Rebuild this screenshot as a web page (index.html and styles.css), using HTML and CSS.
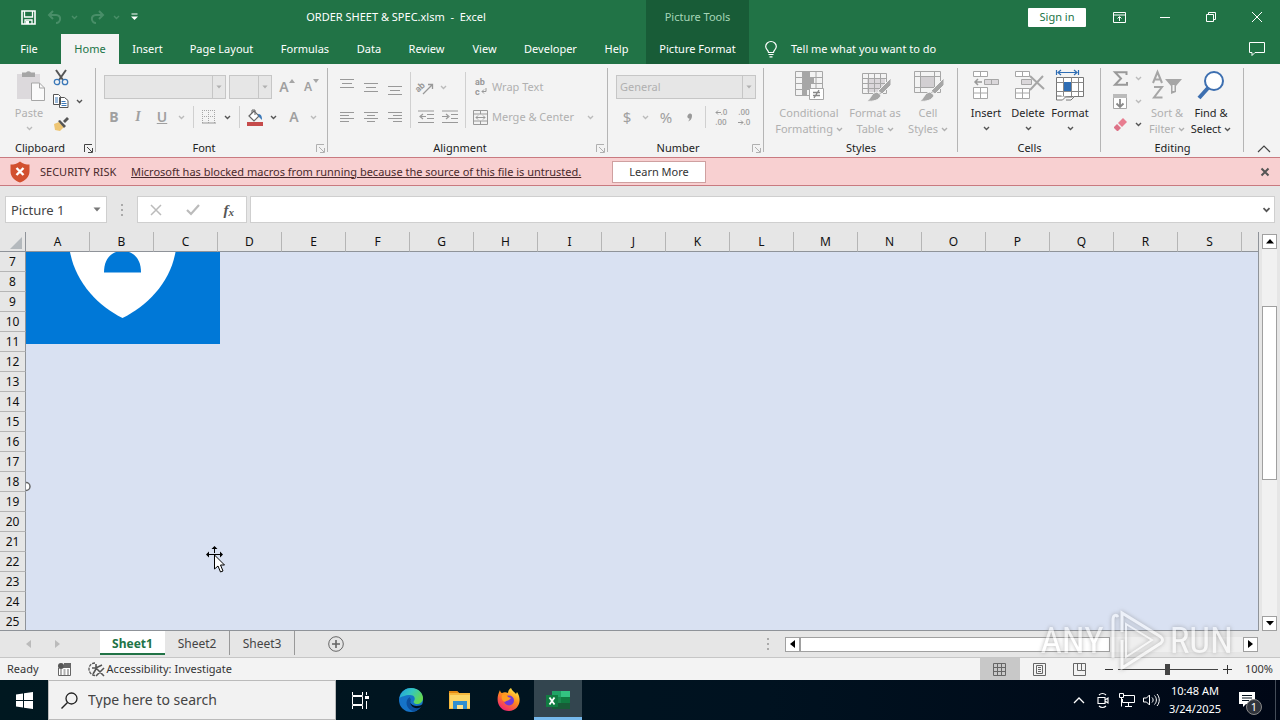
FILE: index.html
```html
<!DOCTYPE html>
<html lang="en">
<head>
<meta charset="utf-8">
<title>ORDER SHEET &amp; SPEC.xlsm - Excel</title>
<link rel="stylesheet" href="styles.css">
</head>
<body>
<svg class="defs" aria-hidden="true">
  <symbol id="chev" viewBox="0 0 7 5"><path d="M1 1l2.500 2.500L6 1" fill="none" stroke="currentColor" stroke-width="1.400"/></symbol>
  <symbol id="tri" viewBox="0 0 8 5"><path d="M0.500 0.500h7L4 4.500z" fill="currentColor"/></symbol>
  <symbol id="launch" viewBox="0 0 9 9"><path d="M0.500 8V0.500H8M3 3l5 5M8.500 4v4.500H4" fill="none" stroke="currentColor"/></symbol>
  <symbol id="brush" viewBox="0 0 32 32"><path d="M32 8v7l-9 9-4-3z" fill="#a6a6a6" stroke="#f3f3f3"/><path d="M18 22l4 3c-1 5-8 7-14 6 4-2 4-8 10-9z" fill="#a6a6a6" stroke="#f3f3f3"/></symbol>
</svg>
<div class="app">
  <header class="header">
    <div class="titlebar">
      <div class="qat">
        <button class="qb" aria-label="Save"><svg width="15" height="15" viewBox="0 0 15 15"><path d="M1 1h13v13H1z" fill="none" stroke="#fff" stroke-width="1.600"/><path d="M3.500 1v6h8V1M4 14v-4h7v4" fill="none" stroke="#fff" stroke-width="1.300"/><path d="M5 11h3v3H5z" fill="#fff"/></svg></button>
        <button class="qb dim" aria-label="Undo"><svg width="16" height="14" viewBox="0 0 16 14"><path d="M6 1L2 5l4 4M2 5h7c6 0 5 8 0 8" fill="none" stroke="currentColor" stroke-width="2"/></svg><svg width="7" height="5"><use href="#chev"/></svg></button>
        <button class="qb dim" aria-label="Redo"><svg width="16" height="14" viewBox="0 0 16 14"><path d="M10 1l4 4-4 4M14 5H7c-6 0-5 8 0 8" fill="none" stroke="currentColor" stroke-width="2"/></svg><svg width="7" height="5"><use href="#chev"/></svg></button>
        <button class="qb" aria-label="Customize"><svg width="7" height="8" viewBox="0 0 7 8"><path d="M0.500 1h6" stroke="#fff"/><path d="M0 3.500h7L3.500 7z" fill="#fff"/></svg></button>
      </div>
      <h1 class="doc">ORDER SHEET &amp; SPEC.xlsm&nbsp; -&nbsp; Excel</h1>
    </div>
    <div class="context">Picture Tools</div>
    <div class="winctl">
      <button class="signin">Sign in</button>
      <button class="wc" aria-label="Ribbon display"><svg width="13" height="11" viewBox="0 0 13 11"><path d="M0.500 0.500h12v10H0.500zM0.500 3h12M6.500 9V5M4.500 6.500l2-2 2 2" fill="none" stroke="#fff"/></svg></button>
      <button class="wc" aria-label="Minimize"><svg width="10" height="11"><path d="M0 5.500h10" stroke="#fff"/></svg></button>
      <button class="wc" aria-label="Restore"><svg width="10" height="10" viewBox="0 0 10 10"><path d="M0.500 2.500h7v7h-7zM2.500 2V0.500h7v7H8" fill="none" stroke="#fff"/></svg></button>
      <button class="wc" aria-label="Close"><svg width="10" height="10"><path d="M0 0l10 10M10 0L0 10" stroke="#fff"/></svg></button>
    </div>
    <nav class="tabs">
      <button class="tab">File</button><button class="tab on">Home</button><button class="tab">Insert</button><button class="tab">Page Layout</button><button class="tab">Formulas</button><button class="tab">Data</button><button class="tab">Review</button><button class="tab">View</button><button class="tab">Developer</button><button class="tab">Help</button>
    </nav>
    <button class="tab ctx">Picture Format</button>
    <div class="tellrow">
      <button class="tell"><svg width="12" height="17" viewBox="0 0 12 17"><path d="M3.500 11.500C3.500 9 0.700 8.500 0.700 5.500a5.300 5 0 0 1 10.600 0c0 3-2.800 3.500-2.800 6zM3.500 13.500h5M4.500 15.800h3" fill="none" stroke="#fff" stroke-width="1.200"/></svg><span>Tell me what you want to do</span></button>
      <button class="comment" aria-label="Comments"><svg width="16" height="14" viewBox="0 0 16 14"><path d="M0.500 0.500h15v10H6l-3 3v-3H0.500z" fill="none" stroke="#fff"/></svg></button>
    </div>
  </header>

  <section class="ribbon" aria-label="Ribbon">
    <div class="group g-clip">
      <div class="body">
        <button class="big off paste"><svg width="32" height="32" viewBox="0 0 32 32"><path d="M4 4h23v25H4z" fill="#dcd9dc"/><path d="M9 2.500h4a3 3 0 0 1 5 0h4V7H9z" fill="#a6a6a6"/><path d="M18.500 13h8l5 5v12.500h-13z" fill="#fafafa" stroke="#a6a6a6"/><path d="M26.500 13v5h5" fill="none" stroke="#a6a6a6"/></svg><span>Paste</span><svg class="under" width="7" height="5"><use href="#chev"/></svg></button>
        <div class="stack">
          <div class="srow"><button class="ib" aria-label="Cut"><svg width="16" height="16" viewBox="0 0 16 16"><path d="M3 0l7 10M13 0L6 10" stroke="#555" stroke-width="2"/><circle cx="4" cy="12" r="2.700" fill="none" stroke="#3b78b8" stroke-width="1.300"/><circle cx="12" cy="12" r="2.700" fill="none" stroke="#3b78b8" stroke-width="1.300"/></svg></button></div>
          <div class="srow"><button class="ib" aria-label="Copy"><svg width="16" height="14" viewBox="0 0 16 14"><path d="M0.500 0.500h5l2 2v8h-7zM6.500 3.500h5l3.500 3v7H6.500z" fill="#fff" stroke="#555"/><path d="M2 4h3M2 6h3M2 8h3M8.500 7.500h4M8.500 9.500h5M8.500 11.500h5" stroke="#3b78b8"/></svg></button><button class="cv on" aria-label="Copy options"><svg width="7" height="5"><use href="#chev"/></svg></button></div>
          <div class="srow"><button class="ib" aria-label="Format Painter"><svg width="16" height="14" viewBox="0 0 16 14"><path d="M1 7l5-2 5 5-4 4-5-1z" fill="#eec573"/><path d="M5 4l2-1 6 6-2 2zM10 4l4-4 2 2-4 4z" fill="#555"/></svg></button></div>
        </div>
      </div>
      <div class="foot"><span>Clipboard</span><button class="dl on" aria-label="Clipboard settings"><svg width="9" height="9"><use href="#launch"/></svg></button></div>
    </div>

    <div class="group g-font">
      <div class="body rows">
        <div class="row1 inset">
          <div class="combo c-name"><input aria-label="Font" disabled><span class="drop"><svg width="6" height="4"><use href="#tri"/></svg></span></div>
          <div class="combo c-size"><input aria-label="Font size" disabled><span class="drop"><svg width="6" height="4"><use href="#tri"/></svg></span></div>
          <button class="ib w24 glyph" aria-label="Increase font">A<svg class="sup" width="6" height="4" viewBox="0 0 6 4"><path d="M0 4l3-4 3 4z" fill="#a6a6a6"/></svg></button>
          <button class="ib w24 glyph small" aria-label="Decrease font">A<svg class="sup" width="6" height="4" viewBox="0 0 6 4"><path d="M0 0l3 4 3-4z" fill="#a6a6a6"/></svg></button>
        </div>
        <div class="row2 tuck">
          <button class="ib w24 glyph bold">B</button><button class="ib w24 glyph ital">I</button><button class="ib w24 glyph und">U</button><button class="cv" aria-label="Underline style"><svg width="7" height="5"><use href="#chev"/></svg></button><i class="sep"></i>
          <button class="ib" aria-label="Borders"><svg width="14" height="14" viewBox="0 0 14 14"><path d="M0.500 0v13M6.500 0v13M12.500 0v13M0 0.500h13M0 6.500h13" stroke="#a6a6a6" stroke-dasharray="1 1" fill="none"/><path d="M0 13h14" stroke="#999"/></svg></button><button class="cv on" aria-label="Border options"><svg width="7" height="5"><use href="#chev"/></svg></button><i class="sep"></i>
          <button class="ib" aria-label="Fill colour"><svg width="18" height="17" viewBox="0 0 18 17"><path d="M3 7l5-5 5 5-5 5z" fill="#fff" stroke="#666" stroke-width="1.200"/><path d="M6 4V1h3v5" fill="none" stroke="#666"/><path d="M12 5c3 0 4 2 4 6l-3-3z" fill="#3b78b8"/><path d="M1 13h16v4H1z" fill="#c54a4a"/></svg></button><button class="cv on" aria-label="Fill options"><svg width="7" height="5"><use href="#chev"/></svg></button>
          <button class="ib w28 glyph" aria-label="Font colour">A</button><button class="cv slim" aria-label="Font colour options"><svg width="7" height="5"><use href="#chev"/></svg></button>
        </div>
      </div>
      <div class="foot"><span>Font</span><button class="dl" aria-label="Font settings"><svg width="9" height="9"><use href="#launch"/></svg></button></div>
    </div>

    <div class="group g-align">
      <div class="body cols">
        <div class="rows">
          <div class="row1"><button class="ib w24" aria-label="Top align"><svg width="14" height="16"><path d="M0 0.500h14M2 4.500h10M0 8.500h14" stroke="#999"/></svg></button><button class="ib w24" aria-label="Middle align"><svg width="14" height="16"><path d="M0 4.500h14M2 8.500h10M0 12.500h14" stroke="#999"/></svg></button><button class="ib w24" aria-label="Bottom align"><svg width="14" height="16"><path d="M0 7.500h14M2 11.500h10M0 15.500h14" stroke="#999"/></svg></button></div>
          <div class="row2"><button class="ib w24" aria-label="Align left"><svg width="14" height="10"><path d="M0 0.500h14M0 3.500h9M0 6.500h14M0 9.500h9" stroke="#999"/></svg></button><button class="ib w24" aria-label="Centre"><svg width="14" height="10"><path d="M0 0.500h14M3 3.500h8M0 6.500h14M3 9.500h8" stroke="#999"/></svg></button><button class="ib w24" aria-label="Align right"><svg width="14" height="10"><path d="M0 0.500h14M5 3.500h9M0 6.500h14M5 9.500h9" stroke="#999"/></svg></button></div>
        </div>
        <i class="vsep"></i>
        <div class="rows">
          <div class="row1"><button class="ib w24" aria-label="Orientation"><svg width="18" height="16" viewBox="0 0 18 16"><text x="-1" y="10" transform="rotate(-42 5 9)" class="ab">ab</text><path d="M6 15L15 6M11 5.500h4.500V10" fill="none" stroke="#999" stroke-width="1.300"/></svg></button><button class="cv slim" aria-label="Orientation options"><svg width="7" height="5"><use href="#chev"/></svg></button></div>
          <div class="row2"><button class="ib w24" aria-label="Decrease indent"><svg width="17" height="14" viewBox="0 0 17 14"><path d="M0 1h16M9 4.500h7M9 8.500h7M0 12.500h16M2 6.500h6M5 4L2 6.500 5 9" fill="none" stroke="#999" stroke-width="1.200"/></svg></button><button class="ib w24" aria-label="Increase indent"><svg width="17" height="14" viewBox="0 0 17 14"><path d="M0 1h16M9 4.500h7M9 8.500h7M0 12.500h16M0 6.500h6M4 4l3 2.500L4 9" fill="none" stroke="#999" stroke-width="1.200"/></svg></button></div>
        </div>
        <i class="vsep"></i>
        <div class="rows">
          <div class="row1"><button class="lb"><svg width="14" height="16" viewBox="0 0 14 16"><text x="1" y="6" class="ab">ab</text><text x="1" y="16" class="ab">c</text><path d="M12 9v3.500H8M10 10.500l-2 2 2 2" fill="none" stroke="#999"/></svg><span>Wrap Text</span></button></div>
          <div class="row2"><button class="lb merge"><svg width="16" height="15" viewBox="0 0 16 15"><path d="M0.500 0.500h14v14H0.500zM0.500 4h14M0.500 11h14M7.500 0v4M7.500 11v4M3 7.500h9M5 5.500l-2 2 2 2M10 5.500l2 2-2 2" fill="none" stroke="#999"/></svg><span>Merge &amp; Center</span></button><button class="cv" aria-label="Merge options"><svg width="7" height="5"><use href="#chev"/></svg></button></div>
        </div>
      </div>
      <div class="foot"><span>Alignment</span><button class="dl" aria-label="Alignment settings"><svg width="9" height="9"><use href="#launch"/></svg></button></div>
    </div>

    <div class="group g-num">
      <div class="body rows">
        <div class="row1 inset"><div class="combo c-num"><input aria-label="Number format" value="General" disabled><span class="drop"><svg width="6" height="4"><use href="#tri"/></svg></span></div></div>
        <div class="row2 inset"><button class="ib glyph thin">$</button><button class="cv" aria-label="Currency options"><svg width="7" height="5"><use href="#chev"/></svg></button><button class="ib w28 glyph thin">%</button><button class="ib w20 glyph comma" aria-label="Comma style"><svg width="6" height="9" viewBox="0 0 6 9"><path d="M1 2a2 2 0 1 1 4 1C5 6 3 8 1 8.500c1-1 1.500-2 1.500-3A2 2 0 0 1 1 2z" fill="#999"/></svg></button><i class="sep"></i><button class="ib dec" aria-label="Increase decimal"><span><svg width="6" height="5" viewBox="0 0 6 5"><path d="M6 2.500H1M3 0.500l-2 2 2 2" fill="none" stroke="#999"/></svg>.0</span><span>.00</span></button><button class="ib w24 dec" aria-label="Decrease decimal"><span>.00</span><span><svg width="6" height="5" viewBox="0 0 6 5"><path d="M0 2.500h5M3 0.500l2 2-2 2" fill="none" stroke="#999"/></svg>.0</span></button></div>
      </div>
      <div class="foot"><span>Number</span><button class="dl" aria-label="Number settings"><svg width="9" height="9"><use href="#launch"/></svg></button></div>
    </div>

    <div class="group g-style">
      <div class="body">
        <button class="big off b-cond"><svg width="32" height="32" viewBox="0 0 32 32"><path d="M2.500 1.500h27v24h-27zM2.500 7.500h27M2.500 13.500h27M2.500 19.500h27M9.500 1v25M16.500 1v25M23 1v25" fill="none" stroke="#a6a6a6"/><path d="M10 2h6v5h-6zM10 8h11v5H10zM10 14h8v5h-8zM10 20h4v5h-4z" fill="#a6a6a6"/><path d="M16.500 18.500h14v11h-14z" fill="#fff" stroke="#a6a6a6"/><path d="M20 22.500h7M20 25.500h7M26 20l-5 8" stroke="#888" stroke-width="1.300"/></svg><span>Conditional<br>Formatting <svg width="7" height="5"><use href="#chev"/></svg></span></button>
        <button class="big off b-tab"><svg width="32" height="32" viewBox="0 0 32 32"><path d="M8 9h18v13H8z" fill="#dad7da"/><path d="M3.500 3.500h24v20h-24zM3.500 8.500h24M3.500 13.500h24M3.500 18.500h24M9.500 3v20M15.500 3v20M21.500 3v20" fill="none" stroke="#a6a6a6"/><use href="#brush"/></svg><span>Format as<br>Table <svg width="7" height="5"><use href="#chev"/></svg></span></button>
        <button class="big off b-cell"><svg width="32" height="32" viewBox="0 0 32 32"><path d="M8 7h15v11H8z" fill="#d2cfd2"/><path d="M2.500 1.500h26v21h-26zM2.500 6.500h26M2.500 17.500h26M8.500 1v21M22.500 1v21" fill="none" stroke="#a6a6a6"/><use href="#brush"/></svg><span>Cell<br>Styles <svg width="7" height="5"><use href="#chev"/></svg></span></button>
      </div>
      <div class="foot"><span>Styles</span></div>
    </div>

    <div class="group g-cells">
      <div class="body">
        <button class="big"><svg width="32" height="32" viewBox="0 0 32 32"><path d="M3.500 1.500h14v5h-14zM10.500 1v5M3.500 17.500h14v11h-14zM3.500 23h14M10.500 17v11" fill="#fff" stroke="#a6a6a6"/><path d="M14.500 9.500h14v5h-14zM21.500 9v5" fill="#dad7da" stroke="#a6a6a6"/><path d="M12 12H5M8 9l-3 3 3 3" fill="none" stroke="#999" stroke-width="1.500"/></svg><span>Insert</span><svg class="under" width="7" height="5"><use href="#chev"/></svg></button>
        <button class="big"><svg width="32" height="32" viewBox="0 0 32 32"><path d="M3.500 1.500h14v5h-14zM10.500 1v5M3.500 18.500h14v10h-14zM3.500 23h14M10.500 18v10" fill="#fff" stroke="#a6a6a6"/><path d="M9.500 9.500h10v5h-10z" fill="#dad7da" stroke="#a6a6a6"/><path d="M18 6l14 13M31 6L18 20" stroke="#a6a6a6" stroke-width="2"/></svg><span>Delete</span><svg class="under" width="7" height="5"><use href="#chev"/></svg></button>
        <button class="big"><svg width="32" height="32" viewBox="0 0 32 32"><path d="M2.500 0v5M24.500 0v5M4 2.500h19M7 0L4 2.500 7 5M20 0l3 2.500L20 5" fill="none" stroke="#2e6db4" stroke-width="1.200"/><path d="M2.500 7.500h27v19h-27z" fill="#fff" stroke="#777"/><path d="M2.500 12.500h27M2.500 21.500h27M9.500 7v19M17.500 7v19M24.500 7v19" stroke="#888"/><path d="M10 12h7v9h-7z" fill="#2e6db4"/><path d="M2.500 26v4h6l3-3h7M12 30h5l4-4M2.500 26h5" fill="#fff" stroke="#777"/></svg><span>Format</span><svg class="under" width="7" height="5"><use href="#chev"/></svg></button>
      </div>
      <div class="foot"><span>Cells</span></div>
    </div>

    <div class="group g-edit">
      <div class="body">
        <div class="stack">
          <div class="srow"><button class="ib" aria-label="AutoSum"><svg width="15" height="15" viewBox="0 0 15 15"><path d="M13.500 4V1.200H2L8 7.500 2 13.800h12V11" fill="none" stroke="#999" stroke-width="2"/></svg></button><button class="cv" aria-label="AutoSum options"><svg width="7" height="5"><use href="#chev"/></svg></button></div>
          <div class="srow"><button class="ib" aria-label="Fill"><svg width="14" height="15" viewBox="0 0 14 15"><path d="M0.500 0.500h13v14H0.500z" fill="#fff" stroke="#a6a6a6"/><path d="M0 0h14v4H0z" fill="#bbb"/><path d="M7 5v8M3.500 9.500L7 13l3.500-3.500" fill="none" stroke="#888" stroke-width="1.800"/></svg></button><button class="cv" aria-label="Fill options"><svg width="7" height="5"><use href="#chev"/></svg></button></div>
          <div class="srow"><button class="ib" aria-label="Clear"><svg width="14" height="13" viewBox="0 0 14 13"><path d="M5 5l5-5 4 4-5 5z" fill="#e87d90"/><path d="M4 6l4 4-3 3H4L1 10V9z" fill="#dd7287"/></svg></button><button class="cv on" aria-label="Clear options"><svg width="7" height="5"><use href="#chev"/></svg></button></div>
        </div>
        <button class="big off"><svg width="32" height="32" viewBox="0 0 32 32"><path d="M2 13L6.500 2 11 13M3.500 9.500h6M3 17h8L3 27.500h8.500" fill="none" stroke="#a6a6a6" stroke-width="2"/><path d="M14 9h17l-6 7v6l-5 2v-8z" fill="#a6a6a6"/><path d="M21.500 15h2v6h-2z" fill="#f3f3f3"/></svg><span>Sort &amp;<br>Filter <svg width="7" height="5"><use href="#chev"/></svg></span></button>
        <button class="big"><svg width="32" height="32" viewBox="0 0 32 32"><path d="M13 18L4 28" stroke="#3d6fb0" stroke-width="4"/><circle cx="19" cy="11" r="9" fill="#fff" stroke="#3d6fb0" stroke-width="2"/></svg><span>Find &amp;<br>Select <svg width="7" height="5"><use href="#chev"/></svg></span></button>
      </div>
      <div class="foot"><span>Editing</span></div>
    </div>
    <button class="collapse" aria-label="Collapse ribbon"><svg width="14" height="8"><path d="M1 7l6-6 6 6" fill="none" stroke="#444" stroke-width="1.200"/></svg></button>
  </section>

  <section class="warn">
    <svg width="20" height="22" viewBox="0 0 20 22"><path d="M10 0.500c3 2.500 6 3 9.500 3V10c0 6-4 9.500-9.500 11.500C4.500 19.500 0.500 16 0.500 10V3.500c3.500 0 6.500-0.500 9.500-3z" fill="#d2502f"/><path d="M6.500 7l7 7M13.500 7l-7 7" stroke="#fff" stroke-width="2.400"/></svg>
    <strong>SECURITY RISK</strong>
    <a href="#">Microsoft has blocked macros from running because the source of this file is untrusted.</a>
    <button class="learn">Learn More</button>
    <button class="dismiss" aria-label="Close message"><svg width="8" height="8"><path d="M0.500 0.500l7 7M7.500 0.500l-7 7" stroke="#555" stroke-width="2"/></svg></button>
  </section>

  <section class="fbar">
    <div class="namebox"><input aria-label="Name box" value="Picture 1"><svg width="8" height="5"><use href="#tri"/></svg></div>
    <span class="dots"><svg width="3" height="12"><path d="M0 0h2v2H0zM0 5h2v2H0zM0 10h2v2H0z" fill="#aaa"/></svg></span>
    <div class="fx">
      <button aria-label="Cancel"><svg width="12" height="12"><path d="M1 1l10 10M11 1L1 11" stroke="#bbb" stroke-width="1.500"/></svg></button>
      <button aria-label="Enter"><svg width="14" height="12"><path d="M1 6l4 4 8-9" fill="none" stroke="#bbb" stroke-width="2.200"/></svg></button>
      <button class="fxb" aria-label="Insert function"><i>f</i><i class="x">x</i></button>
    </div>
    <div class="formula"><input aria-label="Formula"><svg width="9" height="6"><use href="#chev"/></svg></div>
  </section>

  <main class="work">
    <div class="sheet">
      <table class="grid">
        <thead><tr><th class="corner"><svg width="12" height="12"><path d="M12 0v12H0z" fill="#b4b9bd"/></svg></th><th>A</th><th>B</th><th>C</th><th>D</th><th>E</th><th>F</th><th>G</th><th>H</th><th>I</th><th>J</th><th>K</th><th>L</th><th>M</th><th>N</th><th>O</th><th>P</th><th>Q</th><th>R</th><th>S</th><th class="rest"></th></tr></thead>
        <tbody>
          <tr><th>7</th><td colspan="20"></td></tr><tr><th>8</th><td colspan="20"></td></tr><tr><th>9</th><td colspan="20"></td></tr><tr><th>10</th><td colspan="20"></td></tr><tr><th>11</th><td colspan="20"></td></tr><tr><th>12</th><td colspan="20"></td></tr><tr><th>13</th><td colspan="20"></td></tr><tr><th>14</th><td colspan="20"></td></tr><tr><th>15</th><td colspan="20"></td></tr><tr><th>16</th><td colspan="20"></td></tr><tr><th>17</th><td colspan="20"></td></tr><tr><th>18</th><td colspan="20"></td></tr><tr><th>19</th><td colspan="20"></td></tr><tr><th>20</th><td colspan="20"></td></tr><tr><th>21</th><td colspan="20"></td></tr><tr><th>22</th><td colspan="20"></td></tr><tr><th>23</th><td colspan="20"></td></tr><tr><th>24</th><td colspan="20"></td></tr><tr><th>25</th><td colspan="20"></td></tr>
        </tbody>
      </table>
      <svg class="pic" width="194" height="92" viewBox="0 0 194 92"><path d="M0 0h194v92H0z" fill="#0078d7"/><path d="M44 0c6 31 28 54 52.500 66C121 54 144 31 149.500 0z" fill="#fff"/><path d="M78 20.500C78 10 82 3 90 0h13c8 3 12 10 12 20.500z" fill="#0078d7"/></svg>
      <svg class="handle" width="5" height="11" viewBox="0 0 5 11"><circle cx="0" cy="5.500" r="4" fill="#fff" stroke="#666" stroke-width="1.500"/></svg>
      <svg class="cursor" width="20" height="28" viewBox="0 0 20 28"><path d="M8.500 1v6M1 8.500h15M8.500 9v7" stroke="#000"/><path d="M8.500 0l3 3h-6zM0 8.500l3-3v6zM17 8.500l-3-3v6z" fill="#000"/><path d="M8.500 9v14l3.500-3 2.500 6 2.500-1-2.500-6h4z" fill="#fff" stroke="#000"/></svg>
    </div>
    <div class="vscroll">
      <button aria-label="Scroll up"><svg width="8" height="5"><path d="M0 4.500h8L4 0z"/></svg></button>
      <div class="track"><span class="lead"></span><span class="thumb"></span><span class="trail"></span></div>
      <button aria-label="Scroll down"><svg width="8" height="5"><path d="M0 0h8L4 4.500z"/></svg></button>
    </div>
  </main>

  <section class="sheets">
    <div class="nav"><button aria-label="Previous sheet"><svg width="5" height="8"><path d="M5 0v8L0 4z" fill="#bbb"/></svg></button><button aria-label="Next sheet"><svg width="5" height="8"><path d="M0 0v8l5-4z" fill="#bbb"/></svg></button></div>
    <button class="stab on">Sheet1</button><button class="stab">Sheet2</button><button class="stab">Sheet3</button>
    <button class="add" aria-label="New sheet"><svg width="16" height="16"><circle cx="8" cy="8" r="7.300" fill="none" stroke="#666"/><path d="M8 4v8M4 8h8" stroke="#666" stroke-width="1.600"/></svg></button>
    <span class="hdots"><svg width="3" height="12"><path d="M0 0h2v2H0zM0 5h2v2H0zM0 10h2v2H0z" fill="#aaa"/></svg></span>
    <div class="hscroll">
      <button aria-label="Scroll left"><svg width="5" height="8"><path d="M5 0v8L0 4z"/></svg></button>
      <div class="htrack"><span class="hthumb"></span></div>
      <button aria-label="Scroll right"><svg width="5" height="8"><path d="M0 0v8l5-4z"/></svg></button>
    </div>
  </section>

  <footer class="status">
    <span class="ready">Ready</span>
    <button class="macro" aria-label="Record macro"><svg width="13" height="13" viewBox="0 0 13 13"><path d="M0.500 5v7.500h12V0.500H7M1 4.500h12" fill="#fff" stroke="#666"/><path d="M6 0h7v4H6z" fill="#666"/><circle cx="3" cy="3" r="3" fill="#555"/><path d="M2 7h2M5.500 7h2M9 7h2M2 9h2M5.500 9h2M9 9h2M2 11h2M5.500 11h2M9 11h2" stroke="#666"/></svg></button>
    <button class="acc"><svg width="17" height="15" viewBox="0 0 17 15"><path d="M7 1C3 1 1 4 1 7s2 6 6 6.500" fill="none" stroke="#555" stroke-width="1.300" stroke-dasharray="3 1"/><path d="M4 6h4l6-3M8 2v5l-3 5M8 6l8 8M16 6l-8 8" fill="none" stroke="#555" stroke-width="1.600"/></svg><span>Accessibility: Investigate</span></button>
    <div class="views">
      <button class="on" aria-label="Normal"><svg width="13" height="13"><path d="M0.500 0.500h12v12H0.500zM4.500 0v13M8.500 0v13M0 4.500h13M0 8.500h13" fill="none" stroke="#666"/></svg></button>
      <button aria-label="Page layout"><svg width="13" height="13"><path d="M0.500 0.500h12v12H0.500zM3.500 2.500h6v8h-6zM5 4.500h3M5 6.500h3M5 8.500h3" fill="none" stroke="#666"/></svg></button>
      <button aria-label="Page break preview"><svg width="13" height="13"><path d="M0.500 0.500h12v12H0.500zM4.500 0v7.500h4V0M8.500 7.500h4" fill="none" stroke="#666"/></svg></button>
    </div>
    <div class="zoom"><button aria-label="Zoom out"><svg width="8" height="9"><path d="M0 4.500h8" stroke="#333"/></svg></button><input type="range" min="0" max="100" value="50" aria-label="Zoom"><button aria-label="Zoom in"><svg width="9" height="9"><path d="M0 4.500h9M4.500 0v9" stroke="#333"/></svg></button><span>100%</span></div>
  </footer>

  <footer class="taskbar">
    <button class="start" aria-label="Start"><svg width="17" height="17" viewBox="0 0 17 17"><path d="M0 2.500l7-1v6.500H0zM8 1.300L17 0v8H8zM0 9h7v6.500l-7-1zM8 9h9v8l-9-1.300z" fill="#fff"/></svg></button>
    <label class="search"><svg width="17" height="17" viewBox="0 0 17 17"><circle cx="10.500" cy="6.500" r="5.500" fill="none" stroke="#222" stroke-width="1.300"/><path d="M6.500 10.500L0.500 16.500" stroke="#222" stroke-width="1.400"/></svg><input aria-label="Search" placeholder="Type here to search"></label>
    <button class="task first" aria-label="Task view"><svg width="17" height="17" viewBox="0 0 17 17"><path d="M0.500 0v3.500h10V0M0.500 17v-3.500h10V17M0.500 4.500h10v8H0.500zM14.500 0v3M14.500 9v8" fill="none" stroke="#fff"/><path d="M13 4h4v3h-4z" fill="#fff"/></svg></button>
    <button class="task" aria-label="Edge"><svg width="24" height="24" viewBox="0 0 24 24"><defs><linearGradient id="eg" x1="0" y1="0" x2="1" y2="0.500"><stop offset="0" stop-color="#1e9be0"/><stop offset="0.500" stop-color="#34c6c0"/><stop offset="1" stop-color="#64d850"/></linearGradient></defs><circle cx="12" cy="12" r="12" fill="#1573c8"/><path d="M0.500 10C2 3 7 0 12 0c8 0 12 6 12 10s-3 6-6 6-4-2-3-3c2-3 0-6-4-6-5 0-9 2-10.500 3z" fill="url(#eg)"/><path d="M11 9c-6 3-4 13 4 14.500 3-0.500 6-3 7.500-5.500-6 3-13 0-11.500-9z" fill="#0c4f9d"/><path d="M11.500 10c-2 4 1 8 6 8 3 0 5-1 6-2l-1 3c-6 3-13 0-11-9z" fill="#02101c"/></svg></button>
    <button class="task" aria-label="File Explorer"><svg width="22" height="20" viewBox="0 0 22 20"><path d="M0 1h8l2 2h11v16H0z" fill="#f5b83d"/><path d="M0 1h8l2 2H0z" fill="#e38a12"/><path d="M1 5h20v13H1z" fill="#fcd667"/><path d="M4 11h14v8h-4v-4H8v4H4z" fill="#2f8fd0"/><path d="M8 15h6v4H8z" fill="#fbe08a"/></svg></button>
    <button class="task" aria-label="Firefox"><svg width="24" height="24" viewBox="0 0 24 24"><defs><linearGradient id="ff" x1="0.800" y1="0" x2="0.200" y2="1"><stop offset="0" stop-color="#fff04a"/><stop offset="0.450" stop-color="#ff8a1c"/><stop offset="1" stop-color="#f0197c"/></linearGradient></defs><path d="M3 2c0 1 1 3 2 3 2-1 4-1 6 0 0-2 1-4 3-5 1 3 4 4 5 6l1-2c6 9 1 19-8 19S-3 14 3 2z" fill="url(#ff)"/><circle cx="12" cy="12.500" r="5" fill="#7138d8"/><path d="M5 7c3-1 5 0 6 2l3 1c-2 3-5 2-6 4-3-1-4-4-3-7z" fill="#ff9c20"/></svg></button>
    <button class="task active" aria-label="Excel"><svg width="24" height="20" viewBox="0 1 24 20"><path d="M6 2h9v18H6z" fill="#1b8a50"/><path d="M15 2h9v6h-9z" fill="#33c481"/><path d="M6 2h9v6H6z" fill="#21a366"/><path d="M15 8h9v6h-9z" fill="#107c41"/><path d="M6 14h18v6H6z" fill="#185c37"/><path d="M0 6h12v12H0z" fill="#107c41"/><path d="M3.500 8.500l5 7M8.500 8.500l-5 7" stroke="#fff" stroke-width="1.800"/></svg></button>
    <div class="tray">
      <button aria-label="Hidden icons"><svg width="12" height="7"><path d="M1 6l5-5 5 5" fill="none" stroke="#fff" stroke-width="1.300"/></svg></button>
      <button aria-label="Meet now"><svg width="12" height="17" viewBox="0 0 12 17"><path d="M1 5.500h7v6H1zM8 8l3-2v5L8 9M2 3c2-2 5-2 7 0M2 14c2 2 5 2 7 0" fill="none" stroke="#fff" stroke-width="1.100"/></svg></button>
      <button aria-label="Network"><svg width="16" height="14" viewBox="0 0 16 14"><path d="M5 2.500h10.500v7H3.500V6M9.500 10v3M6 13.500h7M0.500 0.500h4v4h-4zM2.500 5v8.500" fill="none" stroke="#fff"/></svg></button>
      <button aria-label="Volume"><svg width="17" height="14" viewBox="0 0 17 14"><path d="M0.500 5h3l3-3v10l-3-3h-3zM9 4.500c1.500 1.500 1.500 3.500 0 5M11.500 2.500c2.500 2.500 2.500 6.500 0 9M14 1c3 3.500 3 8.500 0 12" fill="none" stroke="#fff"/></svg></button>
      <div class="clock"><span>10:48 AM</span><span>3/24/2025</span></div>
      <button class="notif" aria-label="Notifications"><svg width="16" height="16" viewBox="0 0 16 16"><path d="M0 0h16v12H7l-3 3v-3H0z" fill="#fff"/><path d="M3 3.500h10M3 6h10M3 8.500h7" stroke="#02101c"/></svg><span class="badge">1</span></button>
      <span class="desk"></span>
    </div>
  </footer>

  <div class="mark" aria-hidden="true"><span>ANY</span><svg width="54" height="62" viewBox="0 0 54 62"><path d="M3 48V10c0-5 3-6 5-3" fill="none" stroke="#fff" stroke-width="3"/><path d="M12 22V3l39 24c2 2 2 4 0 6L12 58V30" fill="none" stroke="#fff" stroke-width="3"/><path d="M16 14l26 16-26 17z" fill="none" stroke="#fff" stroke-width="2"/></svg><span>RUN</span></div>
</div>
</body>
</html>
```
FILE: styles.css
```css
* { box-sizing: border-box; }
body { margin: 0; font: 11px/16px "Noto Sans", "Open Sans", sans-serif; color: #262626; }
button, input { font: inherit; color: inherit; border: 0; margin: 0; padding: 0; background: none; }
button { display: flex; align-items: center; justify-content: center; white-space: nowrap; }
input { min-width: 0; outline: 0; }
svg { display: block; flex: none; overflow: visible; }
.defs { position: absolute; width: 0; height: 0; }
.app { position: relative; display: flex; flex-direction: column; height: 100vh; overflow: hidden; background: #e6e6e6; }

/* Title bar and tabs */
.header { display: grid; grid-template-columns: 646px 103px 1fr; grid-template-rows: 34px 30px; background: #217346; color: #fff; flex: none; }
.titlebar { display: flex; align-items: center; }
.qat { display: flex; align-items: center; gap: 11px; padding-left: 21px; width: 146px; }
.qb { height: 24px; gap: 8px; }
.qb.dim { color: #5a9a76; }
.qb.dim svg { opacity: .7; }
.doc { flex: 1; margin: 0; font-size: 11px; font-weight: 400; text-align: center; }
.context { display: flex; align-items: center; justify-content: center; background: #185c37; color: #a5d6b8; }
.winctl { display: flex; align-items: center; justify-content: flex-end; }
.signin { width: 58px; height: 19px; background: #fff; color: #217346; margin-right: 10px; border-radius: 1px; }
.wc { width: 46px; height: 30px; }
.tabs { display: grid; grid-template-columns: 61px 58px 57px 91px 76px 52px 63px 53px 79px 53px; }
.tab { height: 30px; color: #fff; }
.tab:first-child { padding-right: 3px; }
.tab.on { background: #f3f3f3; color: #217346; }
.tab.ctx { background: #185c37; }
.tellrow { display: flex; justify-content: space-between; padding: 0 15px 0 16px; }
.tell { gap: 14px; }

/* Ribbon */
.ribbon { display: flex; flex: none; height: 93px; background: #f3f3f3; }
.group { position: relative; display: flex; flex-direction: column; justify-content: space-between; flex: none; padding-bottom: 1px; }
.group::after { content: ""; position: absolute; right: 0; top: 4px; bottom: 5px; width: 1px; background: #b5b5b5; }
.g-clip { width: 96px; }
.g-font { width: 232px; }
.g-align { width: 280px; }
.g-num { width: 156px; }
.g-style { width: 194px; }
.g-cells { width: 143px; }
.g-edit { width: 143px; }
.body { display: flex; }
.rows { display: flex; flex-direction: column; gap: 7px; padding-top: 11px; }
.cols { padding-left: 7px; }
.cols .rows:last-child { flex: 1; }
.row1, .row2 { display: flex; align-items: center; height: 24px; }
.row2 { height: 22px; }
.inset { padding-left: 8px; }
.tuck { padding-left: 6px; }
.foot { display: flex; height: 16px; text-align: center; color: #222; }
.foot span { flex: 1; }
.dl { width: 16px; color: #b0b0b0; }
.dl.on { color: #444; }
.ib { width: 22px; height: 22px; position: relative; flex: none; }
.w20 { width: 20px; }
.w24 { width: 24px; }
.w28 { width: 28px; }
.cv { width: 14px; height: 22px; color: #bbb; }
.cv.on { color: #555; }
.cv.slim { width: 10px; }
.sep { width: 10px; height: 22px; background: linear-gradient(#d0d0d0, #d0d0d0) center / 1px 100% no-repeat; }
.vsep { width: 7px; height: 56px; margin-top: 8px; background: linear-gradient(#d0d0d0, #d0d0d0) center / 1px 100% no-repeat; }
.glyph { font-size: 14px; font-weight: 600; color: #a0a0a0; }
.bold { font-weight: 700; }
.small { font-size: 12px; }
.ital { font-family: "Liberation Serif", serif; font-style: italic; }
.und { text-decoration: underline; }
.thin { font-size: 15px; font-weight: 400; }
.sup { position: absolute; right: 1px; top: 3px; }
.combo { display: flex; height: 24px; background: #e6e6e6; border: 1px solid #c6c6c6; color: #b0b0b0; }
.combo input { flex: 1; width: 0; padding-left: 3px; }
.combo .drop { display: flex; align-items: center; justify-content: center; width: 13px; border-left: 1px solid #c6c6c6; }
.c-name { width: 122px; margin-right: 3px; }
.c-size { width: 43px; }
.c-num { width: 140px; }
.ab { font: 700 9px Roboto, sans-serif; fill: #999; }
.lb { gap: 4px; padding-left: 5px; color: #b0b0b0; }
.merge { padding-left: 4px; gap: 3px; margin-right: 9px; }
.dec { flex-direction: column; font: 600 8px/10px "Open Sans", sans-serif; color: #a0a0a0; }
.dec span { display: flex; align-items: center; }
.big { flex-direction: column; justify-content: flex-start; width: 44px; padding-top: 6px; }
.big span { margin-top: 3px; }
.big span svg { display: inline-block; vertical-align: 1px; color: #555; }
.big.off, .big.off span svg { color: #b0b0b0; }
.under { margin-top: 5px; color: #555; }
.off .under { color: #bbb; }
.paste { width: 34px; margin-left: 12px; }
.stack { display: flex; flex-direction: column; gap: 1px; padding-top: 3px; margin-left: 4px; }
.srow { display: flex; }
.g-edit .stack { margin-left: 8px; }
.g-style .body { padding-left: 9px; }
.g-cells .body { padding-left: 7px; }
.g-cells .big { width: 42px; }
.b-cond { width: 72px; }
.b-tab { width: 60px; }
.b-cell { width: 46px; }
.collapse { margin: auto 9px 4px auto; }

/* Message bar */
.warn { display: flex; align-items: center; flex: none; height: 29px; padding: 0 11px 0 10px; background: #f8d0d1; border: solid #c97a80; border-width: 1px 0; color: #4a2a2c; white-space: nowrap; }
.warn strong { font-weight: 400; margin: 0 10px; min-width: 81px; }
.warn a { color: inherit; min-width: 460px; }
.learn { width: 94px; height: 22px; margin-left: 21px; background: #fff; border: 1px solid #cfa0a0; color: #333; }
.dismiss { margin-left: auto; }

/* Formula bar */
.fbar { display: flex; flex: none; padding: 10px 5px 9px; }
.namebox, .fx, .formula { display: flex; align-items: center; height: 27px; background: #fff; border: 1px solid #cfcfcf; }
.namebox { width: 102px; padding: 0 5px; color: #777; }
.namebox input { flex: 1; width: 0; font-size: 13px; color: #444; }
.dots { display: flex; align-items: center; justify-content: center; width: 30px; }
.fx { width: 110px; justify-content: space-around; }
.fxb { font: italic 700 15px/20px "Liberation Serif", serif; color: #555; }
.fxb .x { font-size: 11px; padding-top: 4px; }
.formula { flex: 1; margin-left: 3px; padding-right: 3px; color: #555; }
.formula input { flex: 1; height: 24px; }

/* Worksheet */
.work { display: flex; flex: 1; min-height: 0; }
.sheet { position: relative; flex: 1; min-width: 0; overflow: hidden; border: solid #8f9399; border-width: 0 1px 1px 0; background: #d9e1f2; }
.grid { width: 100%; table-layout: fixed; border-collapse: separate; border-spacing: 0; font-size: 12px; line-height: 18px; color: #111; }
.grid th { width: 64px; height: 20px; padding: 0; font-weight: 400; background: #e6e6e6; border: solid #b5b5b5; border-width: 0 1px 1px 0; }
.grid thead th { border-bottom-color: #8f9399; }
.grid .corner, .grid tbody th { width: 26px; border-right-color: #8f9399; }
.grid .rest { width: auto; border-right: 0; }
.grid td { padding: 0; }
.corner svg { margin: 2px 0 0 10px; }
.pic { position: absolute; left: 26px; top: 20px; }
.handle { position: absolute; left: 26px; top: 249px; overflow: hidden; }
.cursor { position: absolute; left: 206px; top: 314px; }
.vscroll { display: flex; flex-direction: column; width: 21px; padding: 2px 3px 0; }
.vscroll button, .hscroll button { flex: none; width: 15px; height: 15px; background: #fff; border: 1px solid #a0a0a0; }
.track { flex: 1; display: flex; flex-direction: column; width: 15px; background: #f1f1f1; }
.lead { flex: 58; }
.thumb { flex: 173; background: #fff; border: 1px solid #a0a0a0; }
.trail { flex: 138; }

/* Sheet tabs */
.sheets { display: flex; flex: none; height: 27px; padding-right: 22px; border-bottom: 1px solid #c6c6c6; }
.nav { display: flex; width: 100px; padding: 0 40px 0 26px; justify-content: space-between; }
.stab { width: 65px; height: 24px; padding-top: 2px; font-size: 12px; color: #444; border-right: 1px solid #999; }
.stab.on { padding-top: 3px; background: #fff; color: #217346; font-weight: 700; border-right: 0; border-bottom: 2px solid #217346; }
.add { width: 82px; }
.hdots { display: flex; align-items: center; margin: 0 15px 0 auto; }
.hscroll { display: flex; align-items: center; flex: 0 1 473px; }
.htrack { flex: 1; height: 15px; background: #efefef; }
.hthumb { display: block; width: 70%; height: 15px; background: #fff; border: 1px solid #a0a0a0; }

/* Status bar */
.status { display: flex; flex: none; align-items: center; height: 22px; padding: 0 7px; background: #f3f3f3; color: #333; }
.macro { margin: 0 17px 0 19px; }
.acc { gap: 2px; }
.views { display: flex; margin-left: auto; }
.views button { width: 40px; height: 22px; }
.views .on { background: #c8c8c8; }
.zoom { display: flex; align-items: center; gap: 5px; margin-left: 5px; }
.zoom span { margin-left: 8px; }
.zoom input { -webkit-appearance: none; appearance: none; width: 100px; height: 12px; background: linear-gradient(#444, #444) center / 100% 1px no-repeat; }
.zoom input::-webkit-slider-thumb { -webkit-appearance: none; width: 5px; height: 11px; background: #444; }

/* Taskbar */
.taskbar { display: flex; flex: none; height: 40px; background: linear-gradient(90deg, #001820, #001220 60%, #000716); color: #fff; }
.start { width: 48px; }
.search { display: flex; align-items: center; gap: 10px; width: 288px; padding-left: 12px; background: #f2f2f2; border: 1px solid #bbb; }
.search input { flex: 1; font-size: 14px; }
.search input::placeholder { color: #444; opacity: 1; }
.task { width: 48px; margin-right: 1px; }
.task.first { margin-right: 3px; }
.task.active { background: #33454f; border-bottom: 3px solid #76b9ed; padding-top: 2px; }
.tray { display: flex; margin-left: auto; }
.tray button { width: 24px; }
.clock { display: flex; flex-direction: column; justify-content: center; width: 64px; line-height: 18px; text-align: center; }
.tray .notif { position: relative; width: 40px; margin-right: 8px; }
.badge { position: absolute; left: 19px; top: 19px; width: 16px; height: 16px; border: 1px solid #888; border-radius: 50%; background: #30343c; line-height: 14px; }
.desk { width: 5px; border-left: 1px solid #444c58; }

/* Corner mark */
.mark { position: absolute; right: 47px; bottom: 48px; display: flex; align-items: center; gap: 6px; color: #fff; font: 37px/40px "Liberation Sans Narrow", "Roboto Condensed", Roboto, sans-serif; opacity: .55; pointer-events: none; filter: drop-shadow(0 0 2px #777); }
```
